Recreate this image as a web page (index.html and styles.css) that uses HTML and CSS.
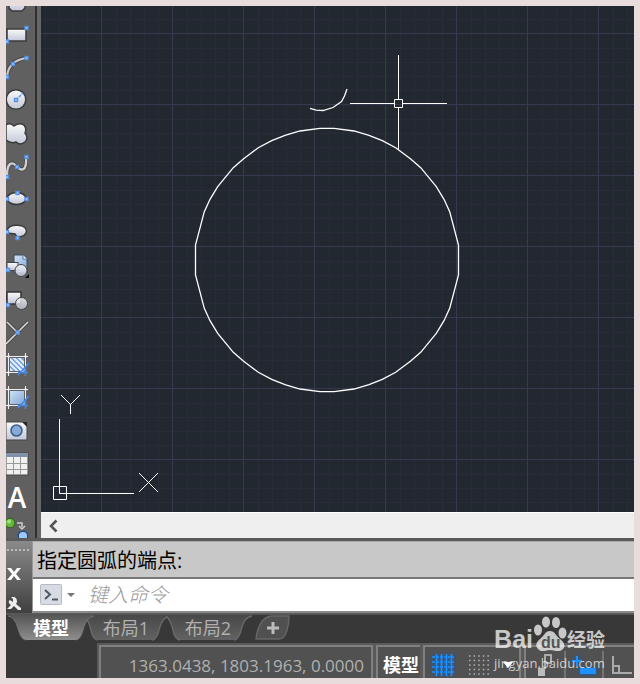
FILE: index.html
```html
<!DOCTYPE html>
<html lang="zh-CN">
<head>
<meta charset="utf-8">
<title>模型</title>
<link rel="stylesheet" href="styles.css">
</head>
<body>
<svg class="defs" aria-hidden="true">
  <defs>
    <linearGradient id="silver" x1="0" y1="0" x2="0" y2="1"><stop offset="0" stop-color="#fafafa"/><stop offset="1" stop-color="#c3c8d8"/></linearGradient>
    <linearGradient id="sky" x1="0" y1="0" x2="1" y2="1"><stop offset="0" stop-color="#d3e3f5"/><stop offset="1" stop-color="#7ea6d8"/></linearGradient>
    <linearGradient id="tabOn" x1="0" y1="0" x2="0" y2="1"><stop offset="0" stop-color="#555"/><stop offset="1" stop-color="#8e8e8e"/></linearGradient>
    <linearGradient id="tabOff" x1="0" y1="0" x2="0" y2="1"><stop offset="0" stop-color="#484848"/><stop offset="1" stop-color="#626262"/></linearGradient>
    <rect id="grip" x="-1.5" y="-1.5" width="3" height="3" fill="#a8cbf8" stroke="#5590e4" stroke-width="1.4"/>
  </defs>
</svg>
<main class="app">
  <section class="workspace">
    <nav class="tools" aria-label="绘图">
      <button class="tool" aria-label="多边形"><svg viewBox="0 0 29 33"><path d="M3 10H19V22L16 25H6L3 22Z" fill="url(#silver)" stroke="#3a3a3a" stroke-width="1.5"/></svg></button>
      <button class="tool" aria-label="矩形"><svg viewBox="0 0 29 33"><rect x="1" y="10" width="19" height="12" fill="url(#silver)" stroke="#3a3a3a" stroke-width="1.5"/><use href="#grip" x="20.5" y="9"/><use href="#grip" x="1" y="22.5"/></svg></button>
      <button class="tool" aria-label="圆弧"><svg viewBox="0 0 29 33"><path d="M1 25Q2 9 20 6" fill="none" stroke="#444" stroke-width="4"/><path d="M1 25Q2 9 20 6" fill="none" stroke="#c8c8c8" stroke-width="2.2"/><use href="#grip" x="20.5" y="6"/><use href="#grip" x="7" y="12"/><use href="#grip" x="1" y="25"/></svg></button>
      <button class="tool" aria-label="圆"><svg viewBox="0 0 29 33"><circle cx="10" cy="14.5" r="9.8" fill="url(#silver)" stroke="#3a3a3a" stroke-width="1.5"/><path d="M10 15L17 8" stroke="#5d9cf0" stroke-width="1.5" stroke-dasharray="3 1"/><use href="#grip" x="10" y="15"/></svg></button>
      <button class="tool" aria-label="修订云线"><svg viewBox="0 0 29 33"><path d="M0 7Q4 4 8 8Q13 4 18 7Q21 11 19 15Q23 20 19 24Q14 28 10 24Q5 26 0 22Z" fill="url(#silver)" stroke="#3a3a3a" stroke-width="1.5"/></svg></button>
      <button class="tool" aria-label="样条曲线"><svg viewBox="0 0 29 33"><path d="M1 25C1 10 7 11 10 15C16 21 21 20 20 6" fill="none" stroke="#444" stroke-width="4"/><path d="M1 25C1 10 7 11 10 15C16 21 21 20 20 6" fill="none" stroke="#d0d0d0" stroke-width="2.4"/><use href="#grip" x="20.5" y="6"/><use href="#grip" x="11" y="16"/><use href="#grip" x="1" y="26"/></svg></button>
      <button class="tool" aria-label="椭圆"><svg viewBox="0 0 29 33"><ellipse cx="10.5" cy="14.5" rx="9.5" ry="6" fill="url(#silver)" stroke="#3a3a3a" stroke-width="1.5"/><use href="#grip" x="11.5" y="9"/><use href="#grip" x="1" y="15"/><use href="#grip" x="20.5" y="15"/></svg></button>
      <button class="tool" aria-label="椭圆弧"><svg viewBox="0 0 29 33"><path d="M1 13C4 6 20 7 20.500 14C20 19 16 20 11 20L9 17L1 16Z" fill="url(#silver)" stroke="#3a3a3a" stroke-width="1.5"/><use href="#grip" x="1" y="15"/><use href="#grip" x="11.5" y="21"/></svg></button>
      <button class="tool" aria-label="插入块"><svg viewBox="0 0 29 33"><path d="M8 5H17L21 9V23H8Z" fill="url(#sky)" stroke="#3a4a60"/><path d="M17 5V9H21" fill="#fff" stroke="#4a76a8"/><rect x="1" y="12.5" width="11" height="8" fill="url(#silver)" stroke="#444"/><circle cx="15" cy="20.5" r="6" fill="url(#silver)" fill-opacity=".85" stroke="#444"/><use href="#grip" x="2" y="20"/><path d="M23 24V28H19Z" fill="#000"/></svg></button>
      <button class="tool" aria-label="创建块"><svg viewBox="0 0 29 33"><rect x="1" y="9" width="14" height="12" fill="url(#silver)" stroke="#333" stroke-width="1.5"/><circle cx="15.5" cy="20.5" r="6" fill="url(#silver)" fill-opacity=".8" stroke="#444"/><use href="#grip" x="2" y="22"/></svg></button>
      <button class="tool" aria-label="点"><svg viewBox="0 0 29 33"><path d="M0 28L22 6M1 6L13 18" stroke="#484848" stroke-width="3.5"/><path d="M0 28L22 6M1 6L13 18" stroke="#d6d6d6" stroke-width="1.6"/><use href="#grip" x="11.5" y="16.5"/></svg></button>
      <button class="tool" aria-label="图案填充"><svg viewBox="0 0 29 33"><rect x="3" y="8" width="16" height="15" fill="#6f9de0"/><path d="M3 19L7 23M3 14L12 23M3 9L17 23M7 8L19 20M12 8L19 15" stroke="#e6eefa" stroke-width="2"/><path d="M0 7.5H22M2.5 4V27M19.5 4V20M0 23.5H15" stroke="#303030" stroke-width="3"/><path d="M0 7.5H22M2.5 4V27M19.5 4V20M0 23.5H15" stroke="#eee" stroke-width="1.5"/><path d="M23 14L12 26M12 23.5H22M19.500 18V27" stroke="#4388ee" stroke-width="1.5"/></svg></button>
      <button class="tool" aria-label="渐变色"><svg viewBox="0 0 29 33"><rect x="3" y="8" width="16" height="15" fill="url(#sky)"/><path d="M0 7.5H22M2.5 4V27M19.5 4V20M0 23.5H15" stroke="#303030" stroke-width="3"/><path d="M0 7.5H22M2.5 4V27M19.5 4V20M0 23.5H15" stroke="#eee" stroke-width="1.5"/><path d="M23 14L12 26M12 23.5H22M19.500 18V27" stroke="#4388ee" stroke-width="1.5"/></svg></button>
      <button class="tool" aria-label="面域"><svg viewBox="0 0 29 33"><path d="M0 7H17L21 11V25H0Z" fill="url(#silver)" stroke="#444"/><path d="M16 7H21V12Z" fill="#282828"/><circle cx="10.5" cy="15.5" r="5.500" fill="#86a9d6" stroke="#3f5f8c" stroke-width="1.6"/></svg></button>
      <button class="tool" aria-label="表格"><svg viewBox="0 0 29 33"><rect x="0" y="5" width="22" height="22" fill="#f1f1f1" stroke="#444"/><path d="M0 5H22V9H0Z" fill="#8390aa"/><path d="M0 15.5H22M0 21.5H22M7.5 9V27M14.5 9V27" stroke="#999"/></svg></button>
      <button class="tool letter" aria-label="多行文字">A</button>
      <button class="tool" aria-label="添加选定对象"><svg viewBox="0 0 29 33"><circle cx="4" cy="9" r="4.8" fill="#67b83d" stroke="#285f1b"/><circle cx="3" cy="7.5" r="2" fill="#a4df7d"/><path d="M11 9H16V13M13 12L16 15L19 12" fill="none" stroke="#d0d0d0" stroke-width="1.5"/><circle cx="17" cy="22" r="4.8" fill="#9cc8fa" stroke="#234d86" stroke-width="1.5"/></svg></button>
    </nav>
    <div class="view">
      <svg class="drawing" role="img" aria-label="绘图区">
        <defs>
          <pattern id="grid" x="60" y="27" width="71" height="71" patternUnits="userSpaceOnUse">
            <path d="M15.5 0V71M29.5 0V71M43.5 0V71M57.5 0V71M0 15.5H71M0 29.5H71M0 43.5H71M0 57.5H71" stroke="#292c38"/>
            <path d="M.5 0V71M0 .5H71" stroke="#37394e"/>
          </pattern>
          <path id="quarter" d="M-131.5 0V-15L-122.7 -48.3L-117 -60.7L-109.3 -73.3L-93.7 -92.3L-83.7 -101L-68.7 -112.3L-55.3 -119.3L-42 -124.7L-27 -129L-7 -131.7H0"/>
        </defs>
        <rect width="100%" height="100%" fill="#212830"/>
        <rect width="100%" height="100%" fill="url(#grid)"/>
        <g transform="translate(-41 -6)" fill="none" stroke="#fff">
          <g transform="translate(327 260)" stroke-width="1.3">
            <use href="#quarter"/><use href="#quarter" transform="scale(-1 1)"/><use href="#quarter" transform="scale(1 -1)"/><use href="#quarter" transform="scale(-1 -1)"/>
          </g>
          <path stroke-width="1.3" d="M310 108.3L316 110.2L323 110.5L333 107.5L341.5 101.5L344.5 96L347 89"/>
          <path d="M398.5 55V99M398.5 108V149M350 103.5H394M403 103.5H447M394.5 99.5H402.5V107.5H394.5Z"/>
          <path d="M59.5 419V493.5H134M53.5 486.5H66.5V499.5H53.5ZM61 395L70.5 404.5L80 395M70.5 404V414M139 473L158 492M158 473L139 492"/>
        </g>
      </svg>
      <div class="hscroll"><button aria-label="向左滚动"><svg width="10" height="14" viewBox="0 0 10 14"><path d="M8.5 1.5L3 7L8.5 12.5" fill="none" stroke="#555" stroke-width="2.6"/></svg></button></div>
    </div>
  </section>

  <section class="command">
    <div class="handle">
      <span class="dots"></span>
      <button aria-label="关闭"><svg width="14" height="14" viewBox="0 0 14 14"><path d="M0 1H4L7 5L10 1H14L9 7L14 13H10L7 9L4 13H0L5 7Z" fill="#fff"/></svg></button>
      <button aria-label="自定义"><svg width="14" height="13" viewBox="0 0 14 13"><path d="M0 12L4 8Q0 5 3 3L6 5V2L4 0Q10-1 10 5L9 7L14 11V13H11L7 9L4 12Z" fill="#eee"/></svg></button>
    </div>
    <div class="console">
      <p class="history">指定圆弧的端点:</p>
      <div class="entry">
        <button class="prompt" aria-label="最近使用的命令"><svg width="35" height="22" viewBox="0 0 35 22"><rect x=".5" y=".5" width="21" height="20" rx="1" fill="#d7dbe3" stroke="#b5bac4"/><path d="M5 6L10 10.5L5 15" fill="none" stroke="#505764" stroke-width="2"/><path d="M12 15.5H18" stroke="#505764" stroke-width="2"/><path d="M27 9H35L31 13Z" fill="#777"/></svg></button>
        <input type="text" aria-label="命令" placeholder="键入命令">
      </div>
    </div>
  </section>

  <nav class="tabs" aria-label="布局">
    <button class="tab on"><svg viewBox="0 0 86 27" preserveAspectRatio="none"><path d="M0 0H86Q79 2 76 12Q73 26 68 26H18Q13 26 10 14Q7 2 0 0Z" fill="url(#tabOn)"/><path d="M0 1Q7 2 10 14Q13 26 18 26M86 1Q79 2 76 12Q73 26 68 26" fill="none" stroke="#777"/></svg><span>模型</span></button>
    <button class="tab"><svg viewBox="0 0 86 27" preserveAspectRatio="none"><path d="M0 0H86Q79 2 76 12Q73 26 68 26H14Q9 26 7 16Q5 5 0 0Z" fill="url(#tabOff)"/><path d="M0 1Q5 5 7 16Q9 26 14 26M86 1Q79 2 76 12Q73 26 68 26" fill="none" stroke="#686868" stroke-width="1.5"/></svg><span>布局1</span></button>
    <button class="tab"><svg viewBox="0 0 86 27" preserveAspectRatio="none"><path d="M0 0H86Q79 2 76 12Q73 26 68 26H14Q9 26 7 16Q5 5 0 0Z" fill="url(#tabOff)"/><path d="M0 1Q5 5 7 16Q9 26 14 26M86 1Q79 2 76 12Q73 26 68 26" fill="none" stroke="#686868" stroke-width="1.5"/></svg><span>布局2</span></button>
    <button class="add" aria-label="新建布局"><svg width="36" height="26" viewBox="0 0 36 26"><path d="M1 24Q4 1 18 1H34Q33 24 24 24Z" fill="#505050" stroke="#666" stroke-width="1.5"/><path d="M12 13H24M18 7V19" stroke="#bbb" stroke-width="3"/></svg></button>
  </nav>

  <footer class="status">
    <div class="cell coords">1363.0438, 1803.1963, 0.0000</div>
    <div class="cell space"><button>模型</button></div>
    <div class="cell grids">
      <button aria-label="栅格"><svg class="glow" width="24" height="24" viewBox="0 0 24 24"><path d="M5.5 1V23M10.5 1V23M15.5 1V23M20.5 1V23" stroke="#1e90ff" stroke-width="1.6"/><path d="M1 4H23M1 9H23M1 14H23M1 19H23" stroke="#1e90ff" stroke-width="1.5" stroke-dasharray="3 1"/></svg></button>
      <button aria-label="捕捉"><svg width="22" height="22" viewBox="0 0 22 22"><path d="M1 2H22M1 6.5H22M1 11H22M1 15.5H22M1 20H22" stroke="#b4b4b4" stroke-width="1.5" stroke-dasharray="1.5 3.1"/></svg></button>
      <button aria-label="捕捉选项"><svg width="10" height="6" viewBox="0 0 10 6"><path d="M0 0H10L5 6Z" fill="#fff"/></svg></button>
    </div>
    <div class="cell modes">
      <button aria-label="推断约束"><svg width="14" height="22" viewBox="0 0 14 22"><path d="M7 1H13V9H7ZM7 2V15" fill="none" stroke="#aaa" stroke-width="2"/><path d="M0 14H7V22H0Z" fill="#bbb"/></svg></button>
      <button aria-label="动态输入"><svg class="glow" width="26" height="20" viewBox="0 0 26 20"><path d="M1 6H11M6 1V11" stroke="#1e90ff" stroke-width="2"/><rect x="9" y="13" width="16" height="6" rx="1" fill="#1e90ff"/></svg></button>
      <button aria-label="正交"><svg width="21" height="20" viewBox="0 0 21 20"><path d="M1 1V18H20M1 11H7V18" fill="none" stroke="#aaa" stroke-width="2"/></svg></button>
    </div>
  </footer>
  <div class="watermark">
    <div class="brand"><span class="bai">Bai</span><span class="paw"><svg width="34" height="36" viewBox="0 0 34 36"><g fill="currentColor"><ellipse cx="5" cy="14" rx="4" ry="5.5"/><ellipse cx="13" cy="6" rx="4" ry="5.5"/><ellipse cx="23" cy="6.5" rx="4" ry="5.5"/><ellipse cx="29.5" cy="17" rx="4" ry="5.5"/><path d="M17 15C12 15 11 20 7 23C3 26 2 30 5 33C9 37 13 34 17 34C21 34 26 37 30 33C33 30 31 26 27 23C23 20 22 15 17 15Z"/></g></svg><span class="du">du</span></span><span class="jy">经验</span></div>
    <div class="site">jingyan.baidu.com</div>
  </div>
</main>
</body>
</html>
```
FILE: styles.css
```css
* { box-sizing: border-box; }
body {
  margin: 0;
  padding: 6px;
  background: #e8dcdc;
  font-family: "Open Sans", "Noto Sans CJK SC", sans-serif;
}
button {
  margin: 0;
  padding: 0;
  border: 0;
  background: none;
  color: inherit;
  font: inherit;
}
svg { display: block; }
.defs { position: absolute; width: 0; height: 0; }
.app {
  position: relative;
  display: flex;
  flex-direction: column;
  height: calc(100vh - 12px);
  overflow: hidden;
  background: #383838;
}

.workspace { flex: 1; display: flex; min-height: 0; }
.tools {
  flex: none;
  width: 35px;
  border-right: 4px solid #666;
  overflow: hidden;
  background: #606060;
  box-shadow: inset -2px 0 #303030;
}
.tool { display: block; width: 29px; height: 33px; }
.tool:first-child { margin-top: -20px; }
.tool svg { width: 29px; height: 33px; }
.letter {
  padding-right: 7px;
  color: #fff;
  font-size: 28px;
  font-weight: 600;
  line-height: 31px;
  text-align: center;
}
.view { flex: 1; display: flex; flex-direction: column; min-width: 0; }
.drawing { flex: 1; width: 100%; min-height: 0; }
.hscroll {
  display: flex;
  align-items: center;
  height: 26px;
  padding: 0 7px;
  border-top: 1px solid #fff;
  background: #efefef;
}

.command {
  display: flex;
  height: 76px;
  border-top: 3px solid #5a5a5a;
  border-bottom: 1px solid #5a5a5a;
}
.handle {
  display: flex;
  flex-direction: column;
  align-items: flex-start;
  width: 27px;
  padding: 8px 1px 0;
  border-right: 1px solid #999;
  background: linear-gradient(#8a8a8a, #404040);
}
.dots { width: 22px; border-top: 2px dotted #bbb; }
.handle button { margin-top: 16px; }
.console { flex: 1; min-width: 0; border-top: 1px solid #aaa; border-bottom: 2px solid #8b8b8b; }
.history {
  height: 37px;
  margin: 0;
  padding: 0 4px;
  border-bottom: 2px solid #777;
  background: #c8c8c8;
  color: #000;
  font-size: 20px;
  line-height: 38px;
}
.entry {
  display: flex;
  align-items: center;
  gap: 13px;
  height: 32px;
  padding: 0 7px;
  background: #fff;
}
.entry input {
  flex: 1;
  min-width: 0;
  height: 28px;
  padding: 0 0 4px;
  border: 0;
  outline: 0;
  background: none;
  font: italic 300 20px/24px "Noto Sans CJK SC", sans-serif;
}
.entry input::placeholder { color: #999; }

.tabs {
  display: flex;
  height: 29px;
  padding-left: 2px;
  border-top: 1px solid #555;
  color: #b0b0b0;
  font-size: 18px;
  line-height: 25px;
}
.tab { position: relative; width: 86px; height: 26px; padding-right: 2px; margin-right: -4px; }
.tab svg { position: absolute; inset: 0; width: 100%; height: 100%; }
.tab span { position: relative; }
.tab.on { z-index: 1; padding: 0; margin-right: -10px; color: #fff; font-weight: 700; }
.add { margin-left: 7px; height: 26px; }

.status {
  display: flex;
  gap: 3px;
  height: 35px;
  margin-left: 91px;
  padding: 2px 0 0 2px;
  background: #5a5a5a;
}
.cell {
  display: flex;
  align-items: center;
  border: 2px solid #808080;
  border-bottom: 0;
  background: #515151;
}
.coords {
  width: 274px;
  padding: 5px 7px 0;
  justify-content: flex-end;
  color: #b0b0b0;
  font-size: 17px;
  white-space: nowrap;
}
.space {
  width: 44px;
  padding: 4px 0 0 5px;
  border-right: 0;
  color: #fff;
  font-size: 18px;
  font-weight: 700;
  line-height: 24px;
  white-space: nowrap;
}
.cell { flex: none; }
.grids { width: 98px; padding: 4px 6px 0 6px; justify-content: space-between; }
.cell.modes { flex: 1; min-width: 0; padding-top: 4px; border-right: 0; overflow: hidden; }
.modes button { flex: none; display: flex; align-items: center; justify-content: center; width: 38px; height: 27px; }
.modes button + button { border-left: 2px solid #747474; }
.glow { filter: drop-shadow(0 0 2px #0860c0); }

.watermark {
  position: absolute;
  right: 29px;
  bottom: 6px;
  color: rgba(255, 255, 255, .72);
  pointer-events: none;
}
.brand { display: flex; align-items: flex-end; height: 40px; padding-bottom: 2px; }
.bai { font: 700 25px/25px "Liberation Sans", sans-serif; }
.paw { position: relative; }
.du {
  position: absolute;
  left: 8px;
  bottom: 1px;
  color: #555;
  font: 700 16px/16px "Liberation Sans", sans-serif;
}
.jy { font-size: 19px; font-weight: 700; line-height: 23px; }
.site { font-size: 13px; line-height: 18px; }
```
